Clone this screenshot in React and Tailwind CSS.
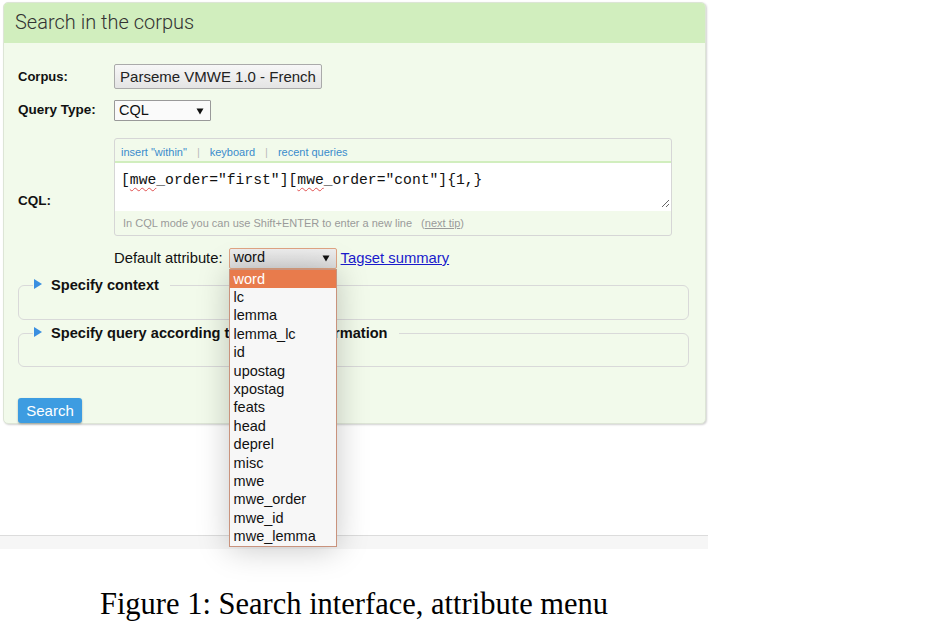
import React from "react";

const items = ["word","lc","lemma","lemma_lc","id","upostag","xpostag","feats","head","deprel","misc","mwe","mwe_order","mwe_id","mwe_lemma"];

function Arrow() {
  return (
    <svg width="8" height="8" viewBox="0 0 8 8" className="block">
      <polygon points="0.5,1.5 7.5,1.5 4,7.5" fill="#111" />
    </svg>
  );
}

function Legend({ children }) {
  return (
    <legend className="ml-[14px] pl-[1px] pr-[11px] flex items-center h-[18px]">
      <svg width="8" height="10" viewBox="0 0 8 10" className="block mr-[9px] -mt-[2px]">
        <polygon points="0,0 8,5 0,10" fill="#3a8fe0" />
      </svg>
      <span className="font-bold text-[14.6px] leading-[18px] text-[#111] -mt-[1px]">{children}</span>
    </legend>
  );
}

export default function App() {
  return (
    <div className="w-[946px] h-[635px] bg-white overflow-hidden font-['Liberation_Sans',Arial,sans-serif] text-[#333]">
      <div className="w-[708px]">
        <div className="h-[535px] pt-[2px] pl-[3px]">
          <div className="w-[703px] h-[422px] rounded-[5px] border border-[#dde5d6] bg-[#f2faeb] shadow-[1px_1px_2px_rgba(0,0,0,0.18)] flex flex-col">
            <div className="h-[40px] shrink-0 bg-[#d1eebe] rounded-t-[4px] flex items-center pl-[11px] pb-[3px] font-['Roboto',sans-serif] font-light text-[20px] text-[#333]">
              Search in the corpus
            </div>
            <div className="pl-[13px] flex flex-col">
              {/* Corpus */}
              <div className="mt-[21px] flex items-center">
                <div className="w-[97px] pl-[1px] font-bold text-[13px] text-[#111]">Corpus:</div>
                <button className="w-[208px] h-[25px] border border-[#aaa] rounded-[2px] bg-gradient-to-b from-[#f7f7f7] to-[#e4e4e4] text-[15px] text-[#222] leading-none">
                  Parseme VMWE 1.0 - French
                </button>
              </div>
              {/* Query type */}
              <div className="mt-[11px] flex items-center">
                <div className="w-[97px] pl-[1px] font-bold text-[13.5px] text-[#111]">Query Type:</div>
                <div className="w-[97px] h-[21px] border border-[#999] rounded-[1px] bg-[#fafafa] flex items-center justify-between pl-[4px] pr-[6px] text-[14.5px] text-[#111]">
                  <span>CQL</span>
                  <Arrow />
                </div>
              </div>
              {/* CQL */}
              <div className="mt-[17px] flex">
                <div className="w-[97px] pl-[1px] pt-[53px] font-bold text-[13.5px] text-[#111]">CQL:</div>
                <div className="w-[558px] h-[98px] border border-[#d6d6d6] rounded-[3px] bg-[#f2faeb] flex flex-col">
                  <div className="h-[24px] flex items-center pl-[6px] pt-[4px] text-[11px] text-[#3a8ccc] border-b-2 border-[#d1eebe]">
                    <span>insert "within"</span>
                    <span className="mx-[10px] text-[#bbb]">|</span>
                    <span>keyboard</span>
                    <span className="mx-[10px] text-[#bbb]">|</span>
                    <span>recent queries</span>
                  </div>
                  <div className="h-[48px] bg-white relative pl-[6px] pt-[8px] font-['Liberation_Mono',monospace] text-[14.7px] leading-[18px] text-[#111]">
                    [<span className="underline decoration-wavy decoration-[#e05050] decoration-1 underline-offset-[3px]">mwe</span>_order="first"][<span className="underline decoration-wavy decoration-[#e05050] decoration-1 underline-offset-[3px]">mwe</span>_order="cont"]{"{1,}"}
                    <svg width="9" height="9" viewBox="0 0 9 9" className="absolute right-[1px] bottom-[3px]">
                      <line x1="1" y1="8" x2="8" y2="1" stroke="#666" strokeWidth="1" />
                      <line x1="5" y1="8" x2="8" y2="5" stroke="#666" strokeWidth="1" />
                    </svg>
                  </div>
                  <div className="flex-1 flex items-center pl-[8px] pt-[1px] text-[11px] text-[#9a9a9a]">
                    <span>In CQL mode you can use Shift+ENTER to enter a new line</span>
                    <span className="ml-[9px]">(<span className="underline">next tip</span>)</span>
                  </div>
                </div>
              </div>
              {/* Default attribute */}
              <div className="mt-[11px] flex items-center pl-[97px]">
                <span className="text-[14.8px] text-[#111] mr-[6px]">Default attribute:</span>
                <div className="relative z-10">
                  <div className="w-[108px] h-[21px] border border-[#e0a483] rounded-[2px] bg-gradient-to-b from-[#eeeeee] to-[#dedede] flex items-center justify-between pl-[4px] pr-[6px] text-[14.5px] text-[#111]">
                    <span>word</span>
                    <Arrow />
                  </div>
                  <div className="absolute top-full left-0 w-[108px] h-[278px] border border-[#c9937d] bg-[#f7f7f7] shadow-[0_2px_30px_rgba(0,0,0,0.22)] flex flex-col">
                    {items.map((it, i) => (
                      <div
                        key={it}
                        className={
                          "h-[18.4px] shrink-0 pl-[4px] text-[14.5px] leading-[18.4px] " +
                          (i === 0 ? "bg-[#e87b4c] text-white" : "text-[#111]")
                        }
                      >
                        {it}
                      </div>
                    ))}
                  </div>
                </div>
                <span className="ml-[4px] text-[14.8px] text-[#1a1acc] underline">Tagset summary</span>
              </div>
              {/* Fieldsets */}
              <fieldset className="mt-[7px] ml-[1px] w-[671px] h-[44px] border border-[#d9d9d9] rounded-[6px]">
                <Legend>Specify context</Legend>
              </fieldset>
              <fieldset className="mt-[4px] ml-[1px] w-[671px] h-[43px] border border-[#d9d9d9] rounded-[6px]">
                <Legend>Specify query according to the meta-information</Legend>
              </fieldset>
              <div className="mt-[31px] ml-[1px]">
                <button className="w-[64px] h-[25px] rounded-[3px] bg-[#3d9ce1] text-white text-[15px] leading-none shadow-[0_1px_2px_rgba(0,0,0,0.3)]">
                  Search
                </button>
              </div>
            </div>
          </div>
        </div>
        <div className="h-[14px] border-t border-[#dcdcdc] bg-[#f6f6f6]" />
        <div className="mt-[40px] text-center font-['Liberation_Serif',serif] text-[30.5px] leading-[30px] text-black">
          Figure 1: Search interface, attribute menu
        </div>
      </div>
    </div>
  );
}
